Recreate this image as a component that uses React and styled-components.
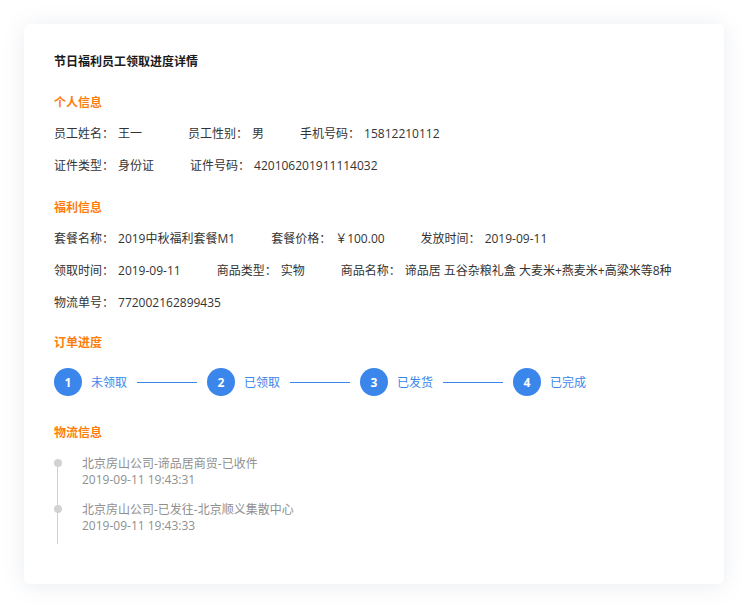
import React from 'react';
import styled, { createGlobalStyle } from 'styled-components';

const GlobalStyle = createGlobalStyle`
  html, body {
    margin: 0;
    padding: 0;
    background: #fff;
  }
  body {
    font-family: "Open Sans", "Noto Sans CJK SC", sans-serif;
    font-size: 12px;
    color: #333;
  }
`;

const Page = styled.div`
  padding: 24px 25px 26px 24px;
`;

const Card = styled.div`
  width: 700px;
  box-sizing: border-box;
  padding: 28px 30px 40px;
  background: #fff;
  border-radius: 6px;
  box-shadow: 0 2px 22px rgba(90, 110, 150, 0.13);
`;

const Title = styled.h1`
  margin: 0;
  font-size: 12px;
  line-height: 20px;
  font-weight: 700;
  color: #1a1a1a;
`;

const Section = styled.section`
  margin-top: ${p => p.mt || 21}px;
`;

const Heading = styled.h2`
  margin: 0;
  font-size: 12px;
  line-height: 20px;
  font-weight: 700;
  color: #ff7d0a;
`;

const Row = styled.div`
  display: flex;
  align-items: center;
  margin-top: 11px;
  line-height: 20px;
  & + & {
    margin-top: 12px;
  }
`;

const Field = styled.div`
  display: flex;
  margin-right: ${p => p.gap || 36}px;
  white-space: nowrap;
`;

const Label = styled.span`
  margin-right: 4px;
`;

const Steps = styled.div`
  display: flex;
  align-items: center;
  margin-top: 15px;
`;

const Step = styled.div`
  display: flex;
  align-items: center;
`;

const Circle = styled.span`
  width: 28px;
  height: 28px;
  border-radius: 50%;
  background: #3b86ea;
  color: #fff;
  font-weight: 700;
  font-size: 12px;
  display: flex;
  align-items: center;
  justify-content: center;
`;

const StepLabel = styled.span`
  margin-left: 9px;
  color: #3b86ea;
  width: 36px;
`;

const Connector = styled.span`
  width: 60px;
  height: 1px;
  background: #3b86ea;
  margin: 0 10px;
`;

const Timeline = styled.div`
  position: relative;
  margin-top: 13px;
  padding-left: 28px;
  padding-bottom: 10px;

  &::before {
    content: '';
    position: absolute;
    left: 3px;
    top: 7px;
    bottom: 0;
    width: 1px;
    background: #cfcfcf;
  }
`;

const Event = styled.div`
  position: relative;
  color: #8f8f8f;
  line-height: 16px;
  & + & {
    margin-top: 14px;
  }

  &::before {
    content: '';
    position: absolute;
    left: -28px;
    top: 3px;
    width: 8px;
    height: 8px;
    border-radius: 50%;
    background: #d2d2d2;
  }
`;

const personal = [
  [
    ['员工姓名：', '王一', 46],
    ['员工性别：', '男'],
    ['手机号码：', '15812210112'],
  ],
  [
    ['证件类型：', '身份证'],
    ['证件号码：', '420106201911114032'],
  ],
];

const welfare = [
  [
    ['套餐名称：', '2019中秋福利套餐M1'],
    ['套餐价格：', '￥100.00'],
    ['发放时间：', '2019-09-11'],
  ],
  [
    ['领取时间：', '2019-09-11'],
    ['商品类型：', '实物'],
    ['商品名称：', '谛品居 五谷杂粮礼盒 大麦米+燕麦米+高粱米等8种'],
  ],
  [['物流单号：', '772002162899435']],
];

const steps = ['未领取', '已领取', '已发货', '已完成'];

const events = [
  ['北京房山公司-谛品居商贸-已收件', '2019-09-11 19:43:31'],
  ['北京房山公司-已发往-北京顺义集散中心', '2019-09-11 19:43:33'],
];

const renderRows = rows =>
  rows.map((row, i) => (
    <Row key={i}>
      {row.map(([label, value, gap]) => (
        <Field key={label} gap={gap}>
          <Label>{label}</Label>
          <span>{value}</span>
        </Field>
      ))}
    </Row>
  ));

export default function App() {
  return (
    <Page>
      <GlobalStyle />
      <Card>
        <Title>节日福利员工领取进度详情</Title>

        <Section>
          <Heading>个人信息</Heading>
          {renderRows(personal)}
        </Section>

        <Section mt={22}>
          <Heading>福利信息</Heading>
          {renderRows(welfare)}
        </Section>

        <Section mt={20}>
          <Heading>订单进度</Heading>
          <Steps>
            {steps.map((s, i) => (
              <Step key={s}>
                <Circle>{i + 1}</Circle>
                <StepLabel>{s}</StepLabel>
                {i < steps.length - 1 && <Connector />}
              </Step>
            ))}
          </Steps>
        </Section>

        <Section mt={27}>
          <Heading>物流信息</Heading>
          <Timeline>
            {events.map(([text, time]) => (
              <Event key={time}>
                <div>{text}</div>
                <div>{time}</div>
              </Event>
            ))}
          </Timeline>
        </Section>
      </Card>
    </Page>
  );
}
